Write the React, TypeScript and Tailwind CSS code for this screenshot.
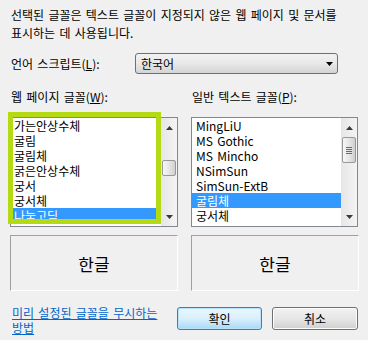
const leftFonts = ["가는안상수체", "굴림", "굴림체", "굵은안상수체", "궁서", "궁서체", "나눔고딕"];
const rightFonts = ["MingLiU", "MS Gothic", "MS Mincho", "NSimSun", "SimSun-ExtB", "굴림체", "궁서체"];

type RowProps = {
    label: string;
    selected: boolean;
    pad: string;
}

const Row = ({ label, selected, pad }: RowProps) => (
    <div className={`h-[15px] leading-[15px] whitespace-nowrap ${pad} ${selected ? "bg-[#3399ff] text-white" : ""}`}>
        {label}
    </div>
);

const Arrow = ({ down }: { down?: boolean }) => (
    <svg width="7" height="4" viewBox="0 0 7 4">
        <path d={down ? "M0 0H7L3.5 4Z" : "M0 4H7L3.5 0Z"} fill="#3a3a3a" />
    </svg>
);

type ScrollProps = {
    offset: string;
    thumb: string;
    grip?: boolean;
}

const ScrollBar = ({ offset, thumb, grip }: ScrollProps) => (
    <div className="w-[16px] h-full flex flex-col bg-gradient-to-r from-[#e6e6e6] to-[#f4f4f4]">
        <div className="h-[17px] flex items-center justify-center pt-[2px]">
            <Arrow />
        </div>
        <div className={offset} />
        <div className={`${thumb} mx-[1px] rounded-[2px] border border-[#989898] bg-gradient-to-r from-[#f7f7f7] via-[#e6e6e6] to-[#cfcfcf] flex flex-col items-center justify-center gap-[1px]`}>
            {grip && (
                <>
                    <div className="w-[6px] h-[1px] bg-[#6a6a6a]" />
                    <div className="w-[6px] h-[1px] bg-[#6a6a6a]" />
                    <div className="w-[6px] h-[1px] bg-[#6a6a6a]" />
                    <div className="w-[6px] h-[1px] bg-[#6a6a6a]" />
                </>
            )}
        </div>
        <div className="flex-1" />
        <div className="h-[17px] flex items-center justify-center pb-[2px]">
            <Arrow down />
        </div>
    </div>
);

const Preview = () => (
    <div className="w-[168px] h-[56px] border border-t-[#a0a0a0] border-l-[#a0a0a0] border-r-white border-b-white flex items-center justify-center text-[17px] pt-[2px]">
        한글
    </div>
);

const App = () => {
    return (
        <div className="w-[368px] h-[340px] bg-[#f0f0f0] overflow-hidden text-[12px] text-black [word-spacing:1.6px] font-['Noto_Sans_CJK_KR',sans-serif]">
            <p className="pt-[6px] pl-[11px] leading-[18px] whitespace-nowrap">
                선택된 글꼴은 텍스트 글꼴이 지정되지 않은 웹 페이지 및 문서를
                <br />
                표시하는 데 사용됩니다.
            </p>

            <div className="mt-[11px] flex items-center h-[21px]">
                <span className="pl-[11px] w-[135px]">언어 스크립트(<u>L</u>):</span>
                <div className="w-[203px] h-[21px] rounded-[3px] border border-[#707070] bg-gradient-to-b from-[#f2f2f2] via-[#e8e8e8] to-[#d4d4d4] flex items-center justify-between pl-[5px] pr-[4px]">
                    <span className="leading-[19px]">한국어</span>
                    <svg width="7" height="4" viewBox="0 0 7 4">
                        <path d="M0 0H7L3.5 4Z" fill="#000" />
                    </svg>
                </div>
            </div>

            <div className="mt-[14px] flex leading-[18px]">
                <span className="pl-[11px] w-[192px]">웹 페이지 글꼴(<u>W</u>):</span>
                <span>일반 텍스트 글꼴(<u>P</u>):</span>
            </div>

            <div className="mt-[11px] flex pl-[10px] gap-[13px] h-[110px]">
                <div className="relative w-[168px] h-full border border-[#828790] bg-white flex">
                    <div className="flex-1 overflow-hidden">
                        {leftFonts.map((item, index) => (
                            <Row key={index} label={item} selected={index === 6} pad="pl-[3px]" />
                        ))}
                    </div>
                    <ScrollBar offset="h-[25px]" thumb="h-[16px]" />
                    <div className="absolute left-[-3px] top-[-6px] w-[153px] h-[112px] border-[5px] border-[#b4da14]" />
                </div>
                <div className="w-[167px] h-full border border-[#828790] bg-white flex">
                    <div className="flex-1 overflow-hidden">
                        {rightFonts.map((item, index) => (
                            <Row key={index} label={item} selected={index === 5} pad="pl-[4px]" />
                        ))}
                    </div>
                    <ScrollBar offset="h-[2px]" thumb="h-[26px]" grip />
                </div>
            </div>

            <div className="mt-[8px] flex pl-[10px] gap-[13px]">
                <Preview />
                <Preview />
            </div>

            <div className="mt-[14px] flex items-start">
                <a href="#" className="w-[177px] pl-[12px] leading-[15px] text-[#0066cc] underline whitespace-nowrap">
                    미리 설정된 글꼴을 무시하는
                    <br />
                    방법
                </a>
                <div className="mt-[2px] flex gap-[10px]">
                    <button className="w-[85px] h-[23px] rounded-[3px] border border-[#3c7fb1] bg-gradient-to-b from-[#eaf6fd] via-[#d9f0fc] to-[#a7d9f5] shadow-[inset_0_0_0_1px_#b6e3fb] leading-[21px]">
                        확인
                    </button>
                    <button className="w-[86px] h-[23px] rounded-[3px] border border-[#707070] bg-gradient-to-b from-[#f2f2f2] via-[#e6e6e6] to-[#d0d0d0] shadow-[inset_0_0_0_1px_#fcfcfc] leading-[21px]">
                        취소
                    </button>
                </div>
            </div>
        </div>
    );
}

export default App;
